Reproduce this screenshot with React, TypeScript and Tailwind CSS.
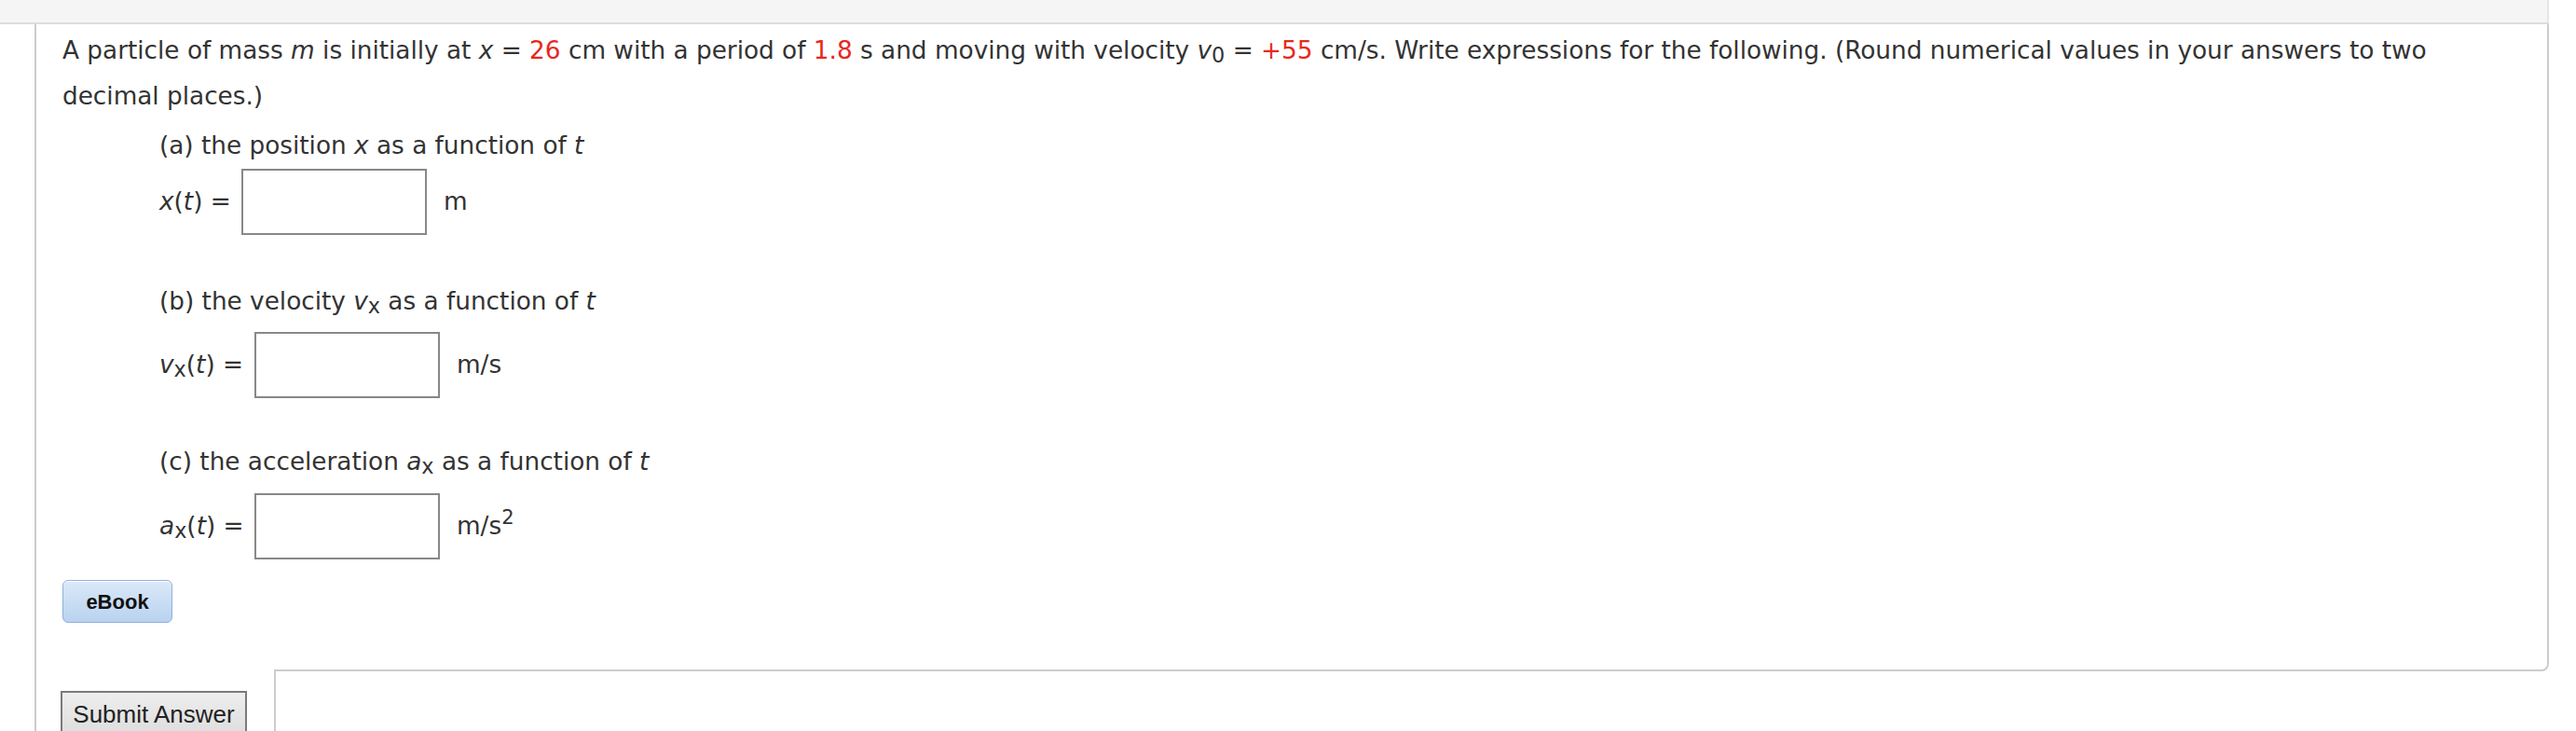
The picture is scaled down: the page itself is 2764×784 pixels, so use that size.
import React from 'react';

const Red = ({ children }: { children: React.ReactNode }) => (
  <span className="text-[#e8281f]">{children}</span>
);

const Sub = ({ children }: { children: React.ReactNode }) => (
  <sub className="text-[0.85em] relative top-[0.2em] align-baseline">{children}</sub>
);

// one answer row: label, empty box, unit
const AnswerRow = ({ label, unit, labelClass }: { label: React.ReactNode; unit: React.ReactNode; labelClass: string }) => (
  <div className="flex items-center">
    <div className={`whitespace-nowrap ${labelClass}`}>{label}</div>
    <div className="h-[71px] w-[199px] border-2 border-[#888888] bg-white"></div>
    <div className="ml-[18px]">{unit}</div>
  </div>
);

const App = () => {
  return (
    <div className="w-[2764px] h-[784px] overflow-hidden bg-white text-[#333333] text-[26.3px]" style={{ fontFamily: '"DejaVu Sans", Verdana, sans-serif' }}>
      <div className="w-[2735px]">
        <div className="h-[24px] bg-[#f5f5f5] border-r-2 border-[#e6e6e6]"></div>
        <div className="h-[2px] bg-[#dddddd]"></div>

        <div className="ml-[37px] border-l-2 border-[#cccccc]">
          {/* question body */}
          <div className="h-[694px] border-r-2 border-b-2 border-[#cccccc] rounded-br-[8px] pl-[28px] pr-[60px] pt-[4px]">
            <p className="leading-[49px]">
              A particle of mass <i>m</i> is initially at <i>x</i> = <Red>26</Red> cm with a period of <Red>1.8</Red> s and moving with velocity <i>v</i><Sub>0</Sub> = <Red>+55</Red> cm/s. Write expressions for the following. (Round numerical values in your answers to two decimal places.)
            </p>

            <div className="pl-[104px]">
              <div className="mt-[8px] leading-[40px]">(a) the position <i>x</i> as a function of <i>t</i></div>
              <div className="mt-[5px]">
                <AnswerRow label={<><i>x</i>(<i>t</i>) =</>} unit="m" labelClass="w-[88px]" />
              </div>

              <div className="mt-[51px] leading-[40px]">(b) the velocity <i>v</i><Sub>x</Sub> as a function of <i>t</i></div>
              <div className="mt-[13px]">
                <AnswerRow label={<><i>v</i><Sub>x</Sub>(<i>t</i>) =</>} unit="m/s" labelClass="w-[102px]" />
              </div>

              <div className="mt-[48px] leading-[40px]">(c) the acceleration <i>a</i><Sub>x</Sub> as a function of <i>t</i></div>
              <div className="mt-[14px]">
                <AnswerRow label={<><i>a</i><Sub>x</Sub>(<i>t</i>) =</>} unit={<>m/s<sup className="text-[0.8em]">2</sup></>} labelClass="w-[102px]" />
              </div>
            </div>

            <button className="mt-[22px] h-[46px] w-[118px] rounded-[6px] border border-[#8fb0dc] bg-gradient-to-b from-[#dce9f8] to-[#b9d2f0] text-[22px] font-bold text-[#111111] shadow-[inset_0_1px_0_#ffffff]" style={{ fontFamily: '"Liberation Sans", Arial, sans-serif' }}>
              eBook
            </button>
          </div>

          {/* bottom row: submit + feedback area */}
          <div className="flex h-[100px] -mt-[2px]">
            <div className="relative w-[255px] bg-white pl-[26px] pt-[23px]">
              <button className="h-[50px] w-[200px] border-2 border-[#7a7a7a] bg-gradient-to-b from-[#eeeeee] to-[#dddddd] text-[26px] text-[#222222]" style={{ fontFamily: '"Liberation Sans", Arial, sans-serif' }}>
                Submit Answer
              </button>
            </div>
            <div className="flex-1 mt-[2px] border-l-2 border-[#cccccc]"></div>
          </div>
        </div>
      </div>
    </div>
  );
};

export default App;
